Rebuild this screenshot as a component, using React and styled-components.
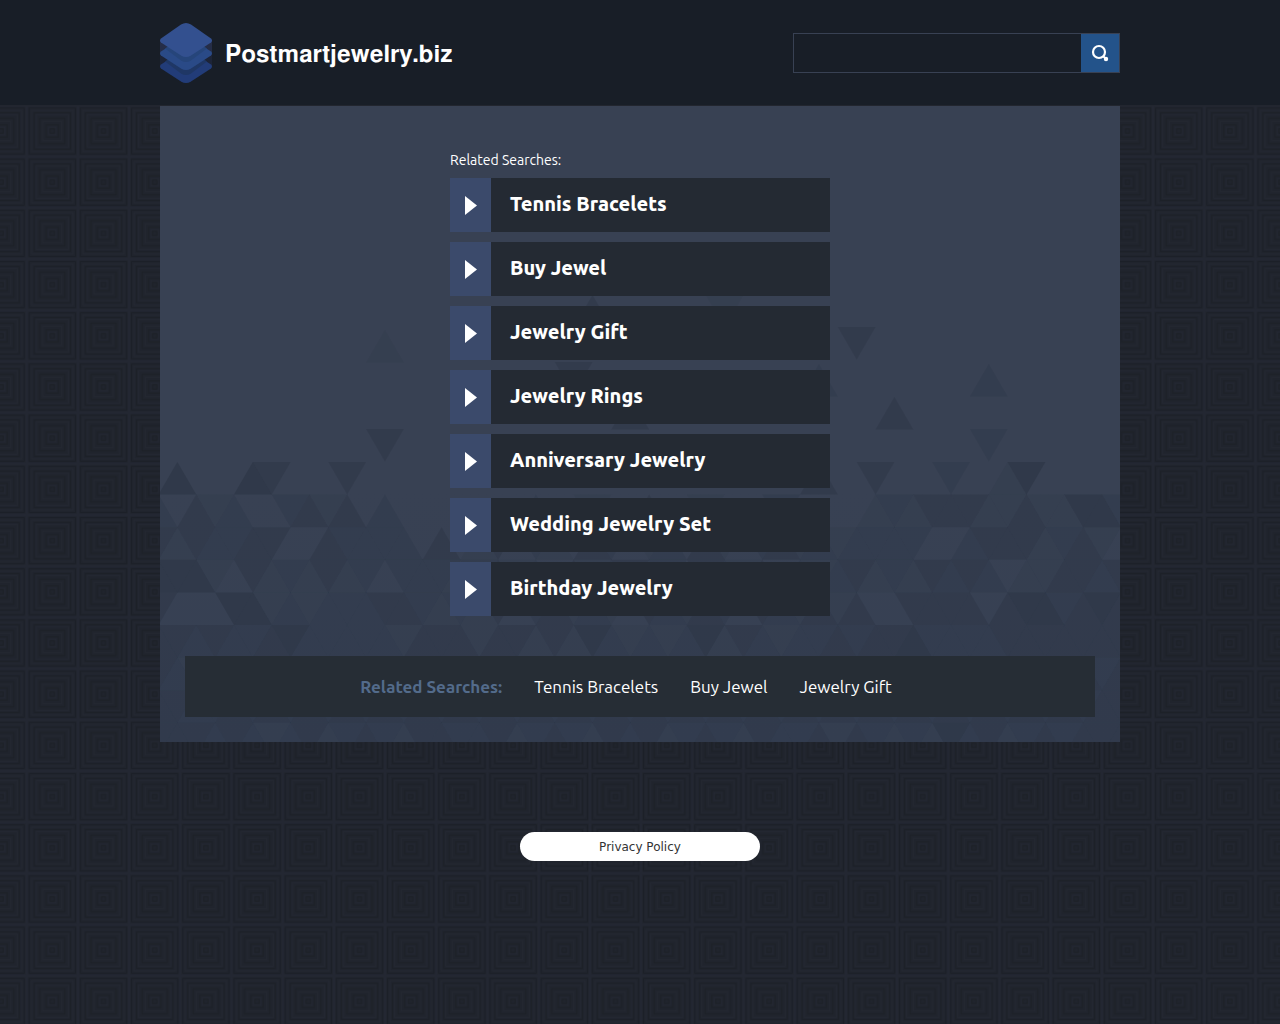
import React from 'react';
import styled, { createGlobalStyle } from 'styled-components';

const GlobalStyle = createGlobalStyle`
    body{
        background-color: #20242d;
        color: #fff;
        font-family: Ubuntu, "Noto Sans", "Open Sans", sans-serif;
        margin: 0;
    }
`

const Page = styled.div`
    isolation: isolate;
    min-height: 100vh;
    position: relative;
`

const Backdrop = styled.svg`
    height: 100%;
    left: 0;
    position: absolute;
    top: 0;
    width: 100%;
    z-index: -1;
`

const Header = styled.header`
    background-color: #181e27;
    border-bottom: 1px solid #22262f;
`

const Container = styled.div`
    box-sizing: border-box;
    margin: 0 auto;
    max-width: 960px;
`

const HeaderRow = styled(Container)`
    align-items: center;
    display: flex;
    justify-content: space-between;
    padding: 23px 0 22px;
`

const Brand = styled.div`
    align-items: center;
    display: flex;
    gap: 13px;

    svg{
        display: block;
        height: 60px;
        width: 52px;
    }

    h1{
        font-family: "Nimbus Sans", "Nimbus Sans L", FreeSans, Helvetica, "Liberation Sans", Arial, sans-serif;
        font-kerning: none;
        font-size: 24px;
        line-height: 28px;
        margin: 0;
        padding-top: 4px;
    }
`

const SearchForm = styled.form`
    border: 1px solid #384153;
    display: flex;
    height: 38px;

    input{
        background: transparent;
        border: 0;
        box-sizing: border-box;
        color: #fff;
        font-size: 16px;
        outline: none;
        padding: 0 10px;
        width: 287px;
    }

    button{
        background-color: #23538a;
        border: 0;
        cursor: pointer;
        display: grid;
        padding: 0;
        place-items: center;
        width: 38px;
    }
`

const Panel = styled(Container)`
    background: linear-gradient(#384153 60%, #364053);
    overflow: hidden;
    padding: 44px 25px 25px;
    position: relative;
`

const Mosaic = styled.svg`
    left: 0;
    position: absolute;
    top: 0;
`

const Related = styled.section`
    margin: 0 auto;
    max-width: 380px;
    position: relative;

    h2{
        font-size: 14px;
        font-weight: 400;
        line-height: 20px;
        margin: 0 0 8px;
    }

    ul{
        display: grid;
        gap: 10px;
        list-style: none;
        margin: 0;
        padding: 0;
    }
`

const RelatedLink = styled.a`
    background-color: #242a33;
    color: #fff;
    display: flex;
    font-size: 20px;
    font-weight: 800;
    height: 54px;
    line-height: 52px;
    text-decoration: none;

    span{
        padding-left: 19px;
    }
`

const Arrow = styled.svg`
    background-color: #3b4a6b;
    flex: none;
    height: 54px;
    width: 41px;
`

const BottomBar = styled.nav`
    align-items: center;
    background-color: #262d35;
    display: flex;
    font-size: 17px;
    gap: 32px;
    justify-content: center;
    line-height: 61px;
    margin-top: 40px;
    padding-right: 28px;
    position: relative;

    strong{
        color: #536b8b;
        font-weight: 600;
    }

    a{
        color: #fff;
        text-decoration: none;
    }
`

const Footer = styled.footer`
    display: flex;
    justify-content: center;
    padding: 90px 0;

    a{
        background-color: #fff;
        border-radius: 15px;
        color: #333;
        font-family: "DejaVu Sans", Verdana, sans-serif;
        font-size: 12px;
        line-height: 28px;
        padding-top: 1px;
        text-align: center;
        text-decoration: none;
        width: 240px;
    }
`

const searches = [
    'Tennis Bracelets',
    'Buy Jewel',
    'Jewelry Gift',
    'Jewelry Rings',
    'Anniversary Jewelry',
    'Wedding Jewelry Set',
    'Birthday Jewelry',
];

// One digit per triangle, 0 is clear and 4 is the darkest.
const mosaicRows = [
    '04000430003000000' + '0000000000000000003' + '0030002001400000',
    '20312002313020000' + '0002001003001000200' + '0012133311311442',
    '31322330032222030' + '1302103201203102312' + '1222200233312310',
    '44410312131202221' + '2312031231203213021' + '2312132320113323',
    '30004412122233212' + '1302312103213203213' + '1300333303442343',
    '33232234222221333' + '1331314212124132122' + '3233422223333333',
    '32123232323232323' + '2323212322123232123' + '2323232123232323',
    '33223232323232323' + '2323232323232323232' + '3232323232323233',
    '33323212312321332' + '2312321323123213223' + '1321214231232333',
];

// Single triangles above the rows: [centre column, top, points up, shade]
const looseTriangles = [
    [23, 189, true, 3],
    [30, 189, false, 1],
    [12, 224, true, 1],
    [37, 221, false, 3],
    [22, 256, false, 3],
    [35, 258, true, 2],
    [44, 258, true, 2],
    [25, 291, true, 3],
    [39, 291, true, 3],
    [12, 323, false, 3],
    [44, 323, false, 2],
];

const HALF = 18.87;
const ROW = 32.6;

function trianglePoints(column, top, up) {
    const x = column * HALF - 1.5;
    const base = up ? top + ROW : top;
    const tip = up ? top : top + ROW;
    return `${x - HALF},${base} ${x + HALF},${base} ${x},${tip}`;
}

function TriangleMosaic() {
    return (
        <Mosaic width="960" height="636" aria-hidden="true">
            <g fill="#242b3b">
                {looseTriangles.map(([column, top, up, shade]) => (
                    <polygon key={`${column}-${top}`} points={trianglePoints(column, top, up)} opacity={shade * 0.09} />
                ))}
                {mosaicRows.map((row, r) => [...row].map((shade, i) => (
                    <polygon
                        key={`${r}-${i}`}
                        points={trianglePoints(i, 356 + r * ROW, (i - 1 + r) % 2 === 0)}
                        opacity={shade * 0.09}
                    />
                )))}
            </g>
        </Mosaic>
    );
}

function SquaresBackdrop() {
    return (
        <Backdrop aria-hidden="true">
            <defs>
                <pattern id="squares" x="26.7" y="105.4" width="51.2" height="51.2" patternUnits="userSpaceOnUse">
                    <rect width="51.2" height="51.2" fill="#20242d" />
                    <path d="M0 0H51.2M0 0V51.2M51.2 0V51.2M0 51.2H51.2" stroke="#232732" strokeWidth="2.4" />
                    <g fill="none" stroke="#1c2027">
                        {[2.5, 7.5, 13, 19.5, 23.5].map(n => (
                            <rect key={n} x={n} y={n} width={51.2 - n * 2} height={51.2 - n * 2} />
                        ))}
                    </g>
                    <g fill="none" stroke="#232731">
                        {[5, 9.5, 16, 21.8].map(n => (
                            <rect key={n} x={n} y={n} width={51.2 - n * 2} height={51.2 - n * 2} />
                        ))}
                    </g>
                </pattern>
            </defs>
            <rect width="100%" height="100%" fill="url(#squares)" />
        </Backdrop>
    );
}

function Logo() {
    return (
        <svg viewBox="0 0 52 60" aria-hidden="true">
            <path d="M0 17H52V30H0Z" fill="#252d47" />
            <path d="M0 30H52V43H0Z" fill="#1d2437" />
            <path d="M1 41.500L22 28Q26 25.500 30 28L51 41.500Q53 43.500 51 45.500L31 58.500Q26 61.500 21 58.500L1 45.500Q-1 43.500 1 41.500Z" fill="#223c78" />
            <path d="M5 38.500L26 24L47 38.500L31 50.500Q26 53.500 21 50.500Z" fill="#1f3765" />
            <path d="M1 28.500L22 15Q26 12.500 30 15L51 28.500Q53 30.500 51 32.500L31 45.500Q26 48.500 21 45.500L1 32.500Q-1 30.500 1 28.500Z" fill="#2a4a87" />
            <path d="M5 25.500L26 11L47 25.500L31 37.500Q26 40.500 21 37.500Z" fill="#26457a" />
            <path d="M1 15.500L21 1.500Q26 -1.500 31 1.500L51 15.500Q53 17.500 51 19.500L31 32.500Q26 35.500 21 32.500L1 19.500Q-1 17.500 1 15.500Z" fill="#33508f" />
        </svg>
    );
}

function App() {
    return (
        <Page>
            <GlobalStyle />
            <SquaresBackdrop />
            <Header>
                <HeaderRow>
                    <Brand>
                        <Logo />
                        <h1>Postmartjewelry.biz</h1>
                    </Brand>
                    <SearchForm onSubmit={e => e.preventDefault()}>
                        <input type="text" name="q" aria-label="Search" />
                        <button type="submit" aria-label="Submit search">
                            <svg width="18" height="18" viewBox="0 0 18 18" fill="none" aria-hidden="true">
                                <circle cx="8" cy="8" r="6" stroke="#fff" strokeWidth="2.2" />
                                <circle cx="15" cy="15" r="2.2" fill="#fff" />
                                <path d="M12 12L15 15" stroke="#fff" strokeWidth="2" />
                            </svg>
                        </button>
                    </SearchForm>
                </HeaderRow>
            </Header>
            <Panel as="main">
                <TriangleMosaic />
                <Related>
                    <h2>Related Searches:</h2>
                    <ul>
                        {searches.map(name => (
                            <li key={name}>
                                <RelatedLink href="#">
                                    <Arrow viewBox="0 0 41 54" aria-hidden="true">
                                        <path d="M15 18L27 27.500L15 37Z" fill="#fff" />
                                    </Arrow>
                                    <span>{name}</span>
                                </RelatedLink>
                            </li>
                        ))}
                    </ul>
                </Related>
                <BottomBar>
                    <strong>Related Searches:</strong>
                    {searches.slice(0, 3).map(name => (
                        <a href="#" key={name}>{name}</a>
                    ))}
                </BottomBar>
            </Panel>
            <Footer>
                <a href="#">Privacy Policy</a>
            </Footer>
        </Page>
    );
}

export default App;
